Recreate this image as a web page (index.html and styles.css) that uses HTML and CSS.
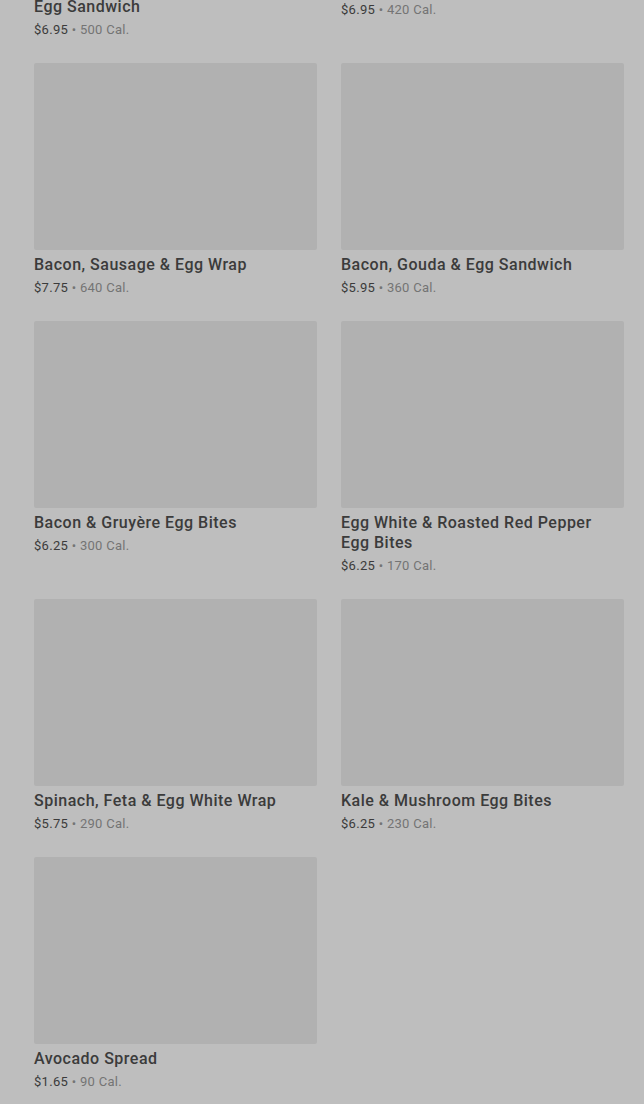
FILE: index.html
```html
<!DOCTYPE html>
<html lang="en">
<head>
    <meta charset="UTF-8">
    <meta name="viewport" content="width=device-width, initial-scale=1.0">
    <title>Breakfast Menu</title>
    <link rel="stylesheet" href="styles.css">
</head>
<body>

    <div class="menu-grid">
        <div class="item">
            <div class="item-image"></div>
            <h3 class="item-name">Double-Smoked Bacon, Cheddar &amp; Egg Sandwich</h3>
            <p class="item-meta"><span class="price">$6.95</span> • 500 Cal.</p>
        </div>
        <div class="item">
            <div class="item-image"></div>
            <h3 class="item-name">Impossible™ Breakfast Sandwich</h3>
            <p class="item-meta"><span class="price">$6.95</span> • 420 Cal.</p>
        </div>

        <div class="item">
            <div class="item-image"></div>
            <h3 class="item-name">Bacon, Sausage &amp; Egg Wrap</h3>
            <p class="item-meta"><span class="price">$7.75</span> • 640 Cal.</p>
        </div>
        <div class="item">
            <div class="item-image"></div>
            <h3 class="item-name">Bacon, Gouda &amp; Egg Sandwich</h3>
            <p class="item-meta"><span class="price">$5.95</span> • 360 Cal.</p>
        </div>

        <div class="item">
            <div class="item-image"></div>
            <h3 class="item-name">Bacon &amp; Gruyère Egg Bites</h3>
            <p class="item-meta"><span class="price">$6.25</span> • 300 Cal.</p>
        </div>
        <div class="item">
            <div class="item-image"></div>
            <h3 class="item-name">Egg White &amp; Roasted Red Pepper Egg Bites</h3>
            <p class="item-meta"><span class="price">$6.25</span> • 170 Cal.</p>
        </div>

        <div class="item">
            <div class="item-image"></div>
            <h3 class="item-name">Spinach, Feta &amp; Egg White Wrap</h3>
            <p class="item-meta"><span class="price">$5.75</span> • 290 Cal.</p>
        </div>
        <div class="item">
            <div class="item-image"></div>
            <h3 class="item-name">Kale &amp; Mushroom Egg Bites</h3>
            <p class="item-meta"><span class="price">$6.25</span> • 230 Cal.</p>
        </div>

        <div class="item">
            <div class="item-image"></div>
            <h3 class="item-name">Avocado Spread</h3>
            <p class="item-meta"><span class="price">$1.65</span> • 90 Cal.</p>
        </div>
    </div>

</body>
</html>
```

FILE: styles.css
```css
/* page, dimmed behind an overlay */
body {
    margin: 0;
    padding: 0;
    background-color: #bebebe;
    font-family: Roboto, "Liberation Sans", sans-serif;
    overflow: hidden;
}

/* two-column product grid, scrolled part way down */
.menu-grid {
    display: grid;
    grid-template-columns: 283px 283px;
    column-gap: 24px;
    row-gap: 23px;
    align-items: start;
    padding: 0 20px 0 34px;
    margin-top: -215px;
}

.item-image {
    height: 187px;
    background-color: #b1b1b1;
    border-radius: 2px;
}

.item-name {
    margin: 5px 0 0;
    padding-right: 8px;
    font-size: 16px;
    line-height: 20px;
    font-weight: 500;
    color: #3b3b3b;
    letter-spacing: 0.5px;
}

.item-meta {
    margin: 3px 0 0;
    font-size: 13px;
    line-height: 20px;
    color: #747474;
    letter-spacing: 0.3px;
}

.price {
    color: #3b3b3b;
}
```
